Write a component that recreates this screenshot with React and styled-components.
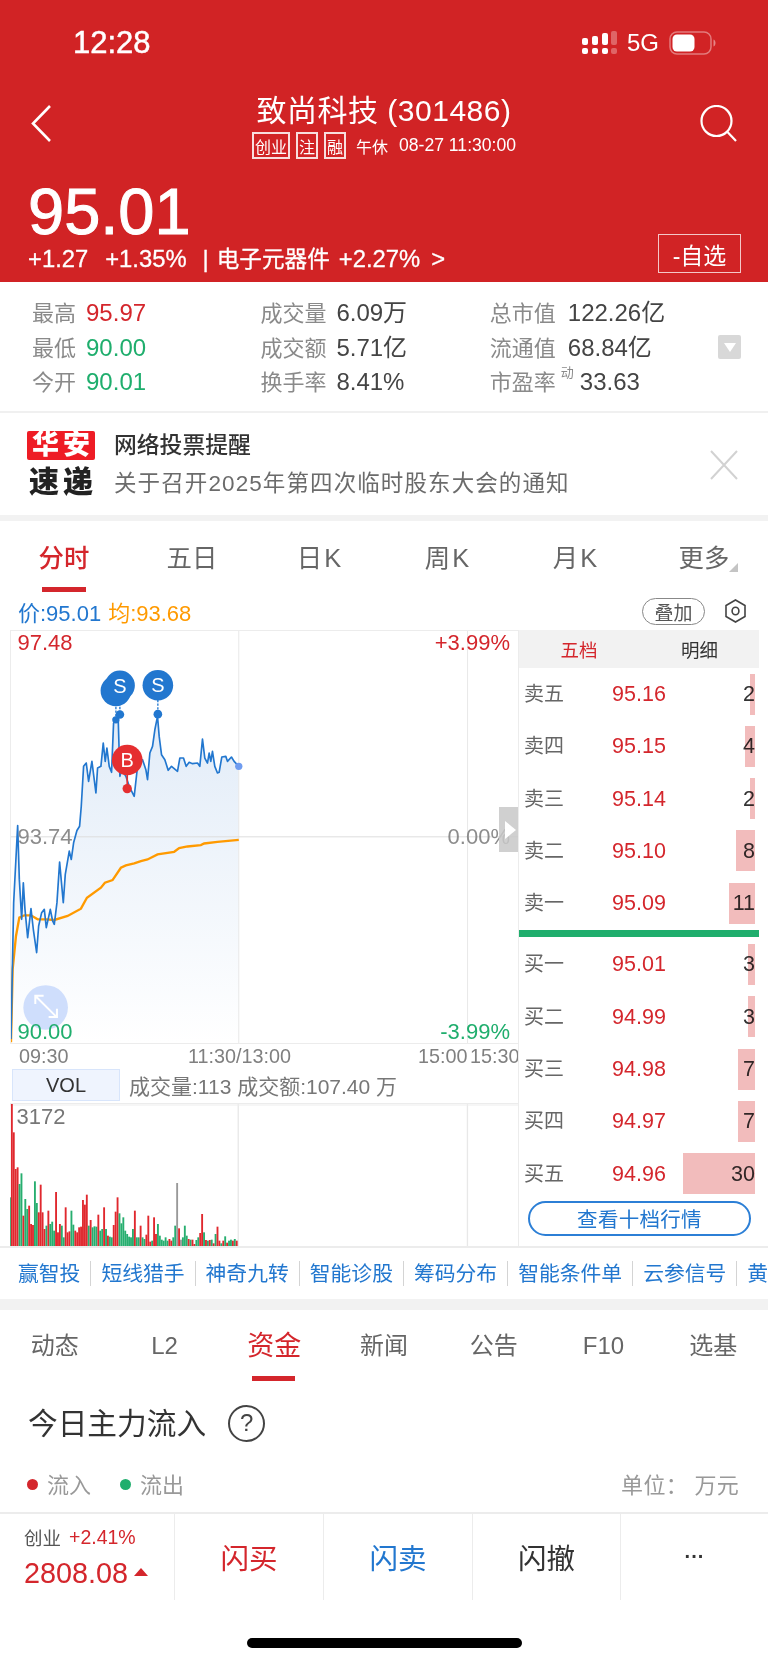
import React from 'react';
import styled, { createGlobalStyle } from 'styled-components';

const RED = '#d4262c';
const GREEN = '#1fae6d';
const BLUE = '#2277cf';
const ORANGE = '#ff9a00';
const LINE = '#ececec';
const FONT = '"Liberation Sans", "Noto Sans CJK SC", sans-serif';

const GlobalStyle = createGlobalStyle`
  html, body {
    margin: 0;
    padding: 0;
    background: #fff;
    font-family: ${FONT};
  }
  * { box-sizing: border-box; }
`;

const Page = styled.div`
  width: 768px;
  height: 1662px;
  overflow: hidden;
  background: #fff;
  color: #333;
`;

// Red header
const Header = styled.header`
  height: 282px;
  background: #d12325;
  color: #fff;
`;

const StatusBar = styled.div`
  height: 86px;
  padding: 0 52px 0 73px;
  display: flex;
  align-items: center;
  justify-content: space-between;
`;

const Clock = styled.span`
  font-size: 31px;
  font-weight: 500;
  -webkit-text-stroke: 0.5px #fff;
`;

const StatusIcons = styled.div`
  display: flex;
  align-items: center;
  gap: 10px;
  font-size: 24px;
`;

const NavRow = styled.div`
  height: 74px;
  padding: 0 31px;
  display: grid;
  grid-template-columns: 1fr auto 1fr;
  align-items: center;
`;

const NavRight = styled.div`
  display: flex;
  justify-content: flex-end;
`;

const TitleBlock = styled.div`
  display: flex;
  flex-direction: column;
  align-items: center;
`;

const StockName = styled.div`
  font-size: 30px;
  line-height: 36px;
  letter-spacing: 0.5px;
  margin-top: 6px;
  white-space: nowrap;
`;

const TagRow = styled.div`
  display: flex;
  align-items: center;
  gap: 6px;
  font-size: 16px;
  white-space: nowrap;
  margin-top: 3px;
`;

const Tag = styled.span`
  height: 27px;
  padding: 0 1px;
  border: 2px solid rgba(255, 255, 255, 0.85);
  display: flex;
  align-items: center;
  font-size: 16px;
`;

const TradeState = styled.span`
  margin-left: 4px;
  margin-right: 5px;
`;

const TradeTime = styled.span`
  font-size: 17.6px;
`;

const PriceRow = styled.div`
  padding: 20px 27px 0 28px;
  display: flex;
  justify-content: space-between;
  align-items: flex-end;
`;

const BigPrice = styled.div`
  font-size: 65px;
  line-height: 64px;
  font-weight: 500;
  -webkit-text-stroke: 1px #fff;
`;

const QuoteLine = styled.div`
  display: flex;
  align-items: baseline;
  font-size: 23.8px;
  line-height: 26px;
  margin-top: 2px;
  white-space: nowrap;
  -webkit-text-stroke: 0.3px #fff;
`;

const QuoteItem = styled.span`
  font-size: ${(p) => (p.$cjk ? '22.6px' : 'inherit')};
  margin-right: ${(p) => p.$gap || 0}px;
`;

const WatchButton = styled.div`
  width: 83px;
  height: 39px;
  border: 1px solid rgba(255, 255, 255, 0.75);
  display: flex;
  align-items: center;
  justify-content: center;
  font-size: 23px;
`;

// Stats
const StatsPanel = styled.section`
  height: 131px;
  padding: 14px 27px 0 32px;
  display: flex;
  border-bottom: 2px solid #f0f0f0;
`;

const StatColumn = styled.div`
  width: ${(p) => p.$w}px;
  display: flex;
  flex-direction: column;
`;

const StatRow = styled.div`
  height: 34.5px;
  line-height: 34.5px;
  display: flex;
  align-items: baseline;
  font-size: 22px;
  white-space: nowrap;
`;

const StatLabel = styled.span`
  color: #8a8a8a;
  margin-right: ${(p) => p.$gap}px;
`;

const StatSup = styled.span`
  align-self: flex-start;
  font-size: 13px;
  line-height: 14px;
  color: #8a8a8a;
  margin-top: 1px;
  margin-left: -7px;
  margin-right: 6px;
`;

const StatValue = styled.span`
  font-size: 24px;
  color: ${(p) => p.$color || '#444'};
`;

const CollapseBox = styled.div`
  width: 23px;
  height: 24px;
  margin-left: auto;
  margin-top: 39px;
  border-radius: 2px;
  background: #d8d8d8;
  display: flex;
  align-items: center;
  justify-content: center;

  &::after {
    content: '';
    border-left: 6px solid transparent;
    border-right: 6px solid transparent;
    border-top: 9px solid #fff;
  }
`;

// Notice
const Notice = styled.section`
  height: 102px;
  padding: 18px 29px 0 27px;
  display: flex;
`;

const NoticeLogo = styled.div`
  width: 68px;
  margin-right: 19px;
  display: flex;
  flex-direction: column;
  align-items: center;
`;

const LogoTop = styled.div`
  width: 68px;
  height: 29px;
  background: #ee1c25;
  border-radius: 2px;
  color: #fff;
  font-size: 27px;
  line-height: 28px;
  font-weight: 900;
  text-align: center;
  letter-spacing: 4px;
  padding-left: 4px;
  white-space: nowrap;
`;

const LogoBottom = styled.div`
  margin-top: 9px;
  color: #222;
  font-size: 30px;
  line-height: 26px;
  font-weight: 900;
  white-space: nowrap;
  letter-spacing: 4px;
  padding-left: 4px;
`;

const NoticeText = styled.div`
  flex: 1;
  display: flex;
  flex-direction: column;
`;

const NoticeTitle = styled.div`
  font-size: 22.8px;
  line-height: 28px;
  color: #333;
  font-weight: 500;
`;

const NoticeBody = styled.div`
  margin-top: 11px;
  font-size: 22.5px;
  line-height: 28px;
  color: #6b6b6b;
  letter-spacing: 1.1px;
  white-space: nowrap;
`;

const CloseIcon = styled.svg`
  width: 30px;
  height: 30px;
  margin-top: 19px;
`;

const Band = styled.div`
  height: ${(p) => p.$h}px;
  background: #f2f2f2;
`;

// Period tabs
const PeriodTabs = styled.nav`
  height: 71px;
  display: grid;
  grid-template-columns: repeat(6, 128px);
`;

const PeriodTab = styled.div`
  position: relative;
  padding-top: 19px;
  line-height: 36px;
  text-align: center;
  font-size: 25.4px;
  letter-spacing: ${(p) => (p.$spaced ? 2 : 0)}px;
  color: ${(p) => (p.$active ? RED : '#666')};
  font-weight: ${(p) => (p.$active ? 500 : 400)};

  &::after {
    content: '';
    display: ${(p) => (p.$active ? 'block' : 'none')};
    position: absolute;
    left: 42px;
    bottom: 0;
    width: 44px;
    height: 5px;
    background: ${RED};
  }
`;

const CornerMark = styled.span`
  position: absolute;
  left: 89px;
  top: 42px;
  width: 9px;
  height: 9px;
  background: #c4c4c4;
  clip-path: polygon(100% 0, 100% 100%, 0 100%);
`;

const PriceLegend = styled.div`
  height: 38px;
  padding: 0 22px 0 18px;
  display: flex;
  align-items: center;
  font-size: 22px;
  white-space: nowrap;
`;

const LegendValue = styled.span`
  color: ${(p) => p.$color};
  margin-right: 7px;
`;

const OverlayButton = styled.div`
  margin-left: auto;
  margin-right: 20px;
  width: 63px;
  height: 27px;
  border: 1px solid #888;
  border-radius: 14px;
  display: flex;
  align-items: center;
  justify-content: center;
  font-size: 19px;
  color: #555;
`;

// Chart + order book
const MarketGrid = styled.section`
  height: 616px;
  display: grid;
  grid-template-columns: 518px 241px;
`;

const ChartColumn = styled.div`
  display: flex;
  flex-direction: column;
`;

const ChartBox = styled.div`
  position: relative;
  width: 508.5px;
  height: 414px;
  margin-left: 9.5px;
  border: 1px solid ${LINE};
  border-right: none;
`;

const ChartSvg = styled.svg`
  display: block;
  width: 100%;
  height: 100%;
`;

const ChartLabel = styled.span`
  position: absolute;
  left: ${(p) => (p.$right ? 'auto' : '7px')};
  right: ${(p) => (p.$right ? '8px' : 'auto')};
  top: ${(p) => p.$top}px;
  font-size: 22px;
  line-height: 26px;
  color: ${(p) => p.$color};
  white-space: nowrap;
`;

const SidePull = styled.div`
  position: absolute;
  right: 0;
  top: 176px;
  width: 19px;
  height: 45px;
  background: rgba(200, 200, 200, 0.85);
  display: flex;
  align-items: center;
  justify-content: center;

  &::after {
    content: '';
    margin-left: 4px;
    border-top: 9px solid transparent;
    border-bottom: 9px solid transparent;
    border-left: 11px solid #fff;
  }
`;

const TimeAxis = styled.div`
  height: 25px;
  padding-left: 19px;
  display: grid;
  grid-template-columns: 169px 230px 52px 48px;
  align-items: center;
  font-size: 19.8px;
  color: #808080;
  white-space: nowrap;
`;

const VolHeader = styled.div`
  height: 34px;
  padding: 0 0 2px 12px;
  display: flex;
  align-items: center;
  gap: 9px;
  font-size: 21px;
  color: #777;
  white-space: nowrap;
`;

const VolTag = styled.div`
  width: 108px;
  height: 32px;
  background: #eff4fe;
  border: 1px solid #d8e5fb;
  color: #333;
  font-size: 20px;
  display: flex;
  align-items: center;
  justify-content: center;
`;

const VolBox = styled.div`
  position: relative;
  width: 508.5px;
  height: 143px;
  margin-left: 9.5px;
  border-top: 1px solid ${LINE};
`;

const OrderBook = styled.div`
  display: flex;
  flex-direction: column;
  border-left: 1px solid ${LINE};
`;

const BookTabs = styled.div`
  height: 38px;
  background: #f2f2f2;
  display: grid;
  grid-template-columns: 120px 121px;
  align-items: center;
  font-size: 18.5px;
  text-align: center;
`;

const BookTab = styled.span`
  color: ${(p) => (p.$active ? RED : '#333')};
`;

const BookRow = styled.div`
  position: relative;
  height: 52.3px;
  line-height: 52.3px;
  padding-left: 5px;
  display: grid;
  grid-template-columns: 45px 140px 46px;
  align-items: baseline;
  font-size: 21.5px;
`;

const BookLabel = styled.span`
  font-size: 20px;
  color: #666;
`;

const BookPrice = styled.span`
  color: ${RED};
  text-align: center;
`;

const BookQty = styled.span`
  text-align: right;
  color: #333;
`;

const QtyBar = styled.span`
  position: absolute;
  right: 4px;
  top: 5.5px;
  height: 41px;
  background: #f2bcbc;
  mix-blend-mode: multiply;
`;

const BookDivider = styled.div`
  height: 7px;
  margin: 1px 0;
  background: ${GREEN};
`;

const BookButton = styled.div`
  height: 35px;
  margin: 1px 8px 0 9px;
  border: 2px solid #2c7fd6;
  border-radius: 18px;
  color: ${BLUE};
  font-size: 20.5px;
  display: flex;
  align-items: center;
  justify-content: center;
  letter-spacing: 0.3px;
`;

// Quick links
const LinkBar = styled.nav`
  height: 53px;
  padding-left: 8px;
  border-top: 2px solid ${LINE};
  display: flex;
  align-items: center;
  overflow: hidden;
  white-space: nowrap;
  font-size: 20.8px;
  color: ${BLUE};
`;

const QuickLink = styled.span`
  flex: none;
  height: 25px;
  line-height: 25px;
  padding: 0 10px;
  border-right: ${(p) => (p.$last ? 'none' : '1px solid #d4d4d4')};
`;

// Section tabs
const SectionTabs = styled.nav`
  height: 71px;
  display: grid;
  grid-template-columns: repeat(7, 1fr);
`;

const SectionTab = styled.div`
  position: relative;
  padding-top: 18px;
  line-height: 36px;
  text-align: center;
  font-size: ${(p) => (p.$active ? 27 : 24)}px;
  color: ${(p) => (p.$active ? RED : '#666')};

  &::after {
    content: '';
    display: ${(p) => (p.$active ? 'block' : 'none')};
    position: absolute;
    left: 33px;
    bottom: 0;
    width: 43px;
    height: 5px;
    background: ${RED};
  }
`;

const FlowTitle = styled.div`
  height: 80px;
  padding-left: 28px;
  display: flex;
  align-items: center;
  gap: 22px;
  font-size: 29.7px;
  color: #333;
`;

const HelpBadge = styled.span`
  width: 37px;
  height: 37px;
  margin-top: 4px;
  border: 2px solid #444;
  border-radius: 50%;
  display: flex;
  align-items: center;
  justify-content: center;
  font-size: 24px;
  color: #444;
`;

const FlowLegend = styled.div`
  height: 44px;
  padding: 0 29px 0 27px;
  display: flex;
  align-items: center;
  font-size: 22px;
  color: #999;
`;

const Dot = styled.i`
  width: 11px;
  height: 11px;
  margin-top: 2px;
  border-radius: 50%;
  background: ${(p) => p.$color};
  margin-right: 9px;
`;

const LegendText = styled.span`
  margin-right: 29px;
`;

const Unit = styled.span`
  margin-left: auto;
  letter-spacing: 0.3px;
`;

// Bottom action bar
const ActionBar = styled.footer`
  height: 88px;
  margin-top: 7px;
  border-top: 2px solid ${LINE};
  display: grid;
  grid-template-columns: 175px 149px 149px 148px 1fr;
`;

const IndexCell = styled.div`
  padding: 8px 0 0 24px;
  border-right: 1px solid ${LINE};
  white-space: nowrap;
`;

const IndexTop = styled.div`
  display: flex;
  align-items: center;
  gap: 8px;
  height: 30px;
  font-size: 18.5px;
  color: #555;
`;

const IndexChange = styled.span`
  color: ${RED};
  font-size: 19.5px;
`;

const IndexPrice = styled.div`
  display: flex;
  align-items: center;
  gap: 6px;
  margin-top: 3px;
  font-size: 28.8px;
  line-height: 36px;
  color: ${RED};

  &::after {
    content: '';
    border-left: 7px solid transparent;
    border-right: 7px solid transparent;
    border-bottom: 8px solid ${RED};
    margin-bottom: 2px;
  }
`;

const ActionCell = styled.div`
  display: flex;
  align-items: center;
  justify-content: center;
  padding-bottom: 1px;
  font-size: ${(p) => (p.$small ? 20 : 28.5)}px;
  font-weight: ${(p) => (p.$small ? 700 : 400)};
  color: ${(p) => p.$color || '#333'};
  border-right: ${(p) => (p.$last ? 'none' : `1px solid ${LINE}`)};
`;

const HomeZone = styled.div`
  height: 62px;
  padding-top: 38px;
  display: flex;
  justify-content: center;
`;

const HomeBar = styled.div`
  width: 275px;
  height: 10px;
  border-radius: 5px;
  background: #000;
`;

// Data read off the picture, in 3x chart units
const pricePoints = '30,1260 38,850 50,618 55,780 62,900 67,790 72,870 80,955 90,868 97,930 107,1000 113,920 122,880 130,870 136,925 148,870 155,905 160,915 168,850 176,728 187,850 193,765 205,695 211,720 218,670 228,633 236,620 241,560 248,440 256,430 263,485 273,425 285,520 290,445 300,440 307,370 313,425 318,385 325,440 332,458 338,310 345,300 352,300 357,470 362,450 375,470 385,500 400,530 410,440 425,420 435,450 440,480 447,400 455,380 462,330 470,290 475,350 482,405 492,420 502,452 512,440 530,455 537,415 548,415 556,440 565,428 575,432 590,430 597,440 605,358 612,415 620,430 625,400 630,425 635,395 642,440 650,460 655,458 663,412 675,410 680,425 692,412 700,425 714,440';
const avgPoints = '30,1270 35,1050 45,950 55,895 70,888 90,888 110,900 135,900 160,902 200,890 240,868 258,835 300,805 312,790 335,782 360,745 375,738 400,732 420,725 440,720 470,705 520,697 535,686 560,681 600,677 610,672 650,667 714,661';

const volBars = [
  ['g', 470], ['r', 190], ['r', 275], ['r', 385], ['r', 380], ['g', 430], ['g', 398], ['r', 525], ['g', 475], ['g', 505],
  ['r', 495], ['r', 550], ['r', 553], ['g', 422], ['g', 487], ['r', 515], ['r', 432], ['r', 515], ['r', 565], ['g', 555],
  ['r', 510], ['g', 550], ['g', 543], ['g', 570], ['r', 454], ['r', 575], ['r', 550], ['g', 555], ['g', 590], ['r', 500],
  ['r', 575], ['r', 572], ['g', 510], ['g', 552], ['r', 570], ['r', 575], ['r', 560], ['r', 558], ['r', 478], ['r', 492],
  ['r', 462], ['g', 555], ['r', 538], ['g', 560], ['g', 557], ['g', 558], ['r', 522], ['g', 570], ['g', 565], ['r', 500],
  ['g', 565], ['r', 585], ['g', 588], ['g', 590], ['r', 553], ['r', 513], ['r', 470], ['g', 518], ['g', 548], ['g', 530],
  ['g', 570], ['g', 580], ['g', 588], ['g', 590], ['g', 565], ['r', 510], ['g', 590], ['g', 590], ['r', 555], ['g', 590],
  ['g', 595], ['r', 582], ['r', 525], ['r', 603], ['g', 600], ['r', 530], ['r', 580], ['g', 550], ['g', 585], ['g', 597],
  ['g', 600], ['g', 590], ['g', 600], ['r', 595], ['r', 600], ['g', 590], ['g', 555], ['n', 427], ['r', 563], ['n', 597],
  ['g', 590], ['g', 555], ['g', 585], ['r', 595], ['g', 597], ['r', 597], ['r', 610], ['g', 598], ['g', 590], ['r', 577],
  ['r', 520], ['g', 575], ['r', 598], ['g', 600], ['r', 598], ['g', 597], ['r', 608], ['g', 580], ['r', 558], ['r', 600],
  ['g', 608], ['r', 600], ['g', 587], ['r', 606], ['g', 600], ['g', 597], ['r', 600], ['g', 595], ['r', 600],
];
const volColors = { r: '#e0282e', g: '#27ae6f', n: '#999' };

const stats = [
  {
    width: 230,
    gap: 10,
    items: [
      { label: '最高', value: '95.97', color: RED },
      { label: '最低', value: '90.00', color: GREEN },
      { label: '今开', value: '90.01', color: GREEN },
    ],
  },
  {
    width: 231,
    gap: 10,
    items: [
      { label: '成交量', value: '6.09万' },
      { label: '成交额', value: '5.71亿' },
      { label: '换手率', value: '8.41%' },
    ],
  },
  {
    width: 230,
    gap: 12,
    items: [
      { label: '总市值', value: '122.26亿' },
      { label: '流通值', value: '68.84亿' },
      { label: '市盈率', sup: '动', value: '33.63' },
    ],
  },
];

const asks = [
  ['卖五', '95.16', 2], ['卖四', '95.15', 4], ['卖三', '95.14', 2], ['卖二', '95.10', 8], ['卖一', '95.09', 11],
];
const bids = [
  ['买一', '95.01', 3], ['买二', '94.99', 3], ['买三', '94.98', 7], ['买四', '94.97', 7], ['买五', '94.96', 30],
];

const links = ['赢智投', '短线猎手', '神奇九转', '智能诊股', '筹码分布', '智能条件单', '云参信号', '黄金分割'];
const sectionTabs = ['动态', 'L2', '资金', '新闻', '公告', 'F10', '选基'];

const SignalIcon = () => (
  <svg width="35" height="24" viewBox="0 0 35 24" fill="#fff">
    <rect x="0" y="7" width="6" height="7" rx="2" />
    <rect x="10" y="5" width="6" height="9" rx="2" />
    <rect x="20" y="2" width="6" height="12" rx="2" />
    <rect x="29" y="0" width="6" height="14" rx="2" opacity="0.3" />
    <rect x="0" y="17" width="6" height="6" rx="2" />
    <rect x="10" y="17" width="6" height="6" rx="2" />
    <rect x="20" y="17" width="6" height="6" rx="2" />
    <rect x="29" y="17" width="6" height="6" rx="2" opacity="0.3" />
  </svg>
);

const BatteryIcon = () => (
  <svg width="47" height="24" viewBox="0 0 47 24" fill="none">
    <rect x="1" y="1" width="41" height="22" rx="7" stroke="#fff" strokeOpacity="0.4" strokeWidth="1.5" />
    <rect x="3.5" y="3.5" width="22" height="17" rx="4.5" fill="#fff" />
    <path d="M44.5 8.5c1.5.6 2 2 2 3.5s-.5 2.9-2 3.5z" fill="#fff" fillOpacity="0.45" />
  </svg>
);

const BackIcon = () => (
  <svg width="20" height="37" viewBox="0 0 20 37" fill="none">
    <path d="M19 1 2 18.5 19 36" stroke="#fff" strokeWidth="2.6" />
  </svg>
);

const SearchIcon = () => (
  <svg width="37" height="37" viewBox="0 0 37 37" fill="none">
    <circle cx="16.5" cy="16" r="15" stroke="#fff" strokeWidth="2.2" />
    <path d="M27.5 27 36 36" stroke="#fff" strokeWidth="2.2" />
  </svg>
);

const HexIcon = () => (
  <svg width="21" height="24" viewBox="0 0 21 24" fill="none" stroke="#444" strokeWidth="1.6">
    <path d="M10.5 1 20 6.5v11L10.5 23 1 17.5v-11z" />
    <ellipse cx="10.5" cy="12" rx="3.4" ry="3.8" />
  </svg>
);

const PriceChart = () => (
  <ChartSvg viewBox="30 33 1524 1239" preserveAspectRatio="none">
    <defs>
      <linearGradient id="areaFill" x1="0" y1="0" x2="0" y2="1">
        <stop offset="0" stopColor="#e2ecf8" />
        <stop offset="1" stopColor="#ffffff" />
      </linearGradient>
    </defs>
    <polygon points={`${pricePoints} 714,1272 30,1272`} fill="url(#areaFill)" />
    <path d="M714 33V1272M1401 33V1272" stroke="#e8e8e8" strokeWidth="3" />
    <path d="M30 652H1554" stroke="#ddd" strokeWidth="3" />
    <polyline points={avgPoints} fill="none" stroke={ORANGE} strokeWidth="7" />
    <polyline points={pricePoints} fill="none" stroke={BLUE} strokeWidth="5" strokeLinejoin="round" />
    <circle cx="714" cy="440" r="11" fill="#6f9cf0" />

    <path d="M345 250V300M357 250V284M471 240V283" stroke={BLUE} strokeWidth="4" strokeDasharray="7 4" />
    <circle cx="345" cy="300" r="11" fill={BLUE} />
    <circle cx="357" cy="284" r="13" fill={BLUE} />
    <circle cx="471" cy="283" r="13" fill={BLUE} />
    <circle cx="345" cy="213" r="46" fill={BLUE} />
    <circle cx="357" cy="197" r="45" fill={BLUE} />
    <circle cx="471" cy="196" r="46" fill={BLUE} />
    <text x="357" y="219" textAnchor="middle" fontFamily={FONT} fontSize="60" fill="#fff">S</text>
    <text x="471" y="217" textAnchor="middle" fontFamily={FONT} fontSize="60" fill="#fff">S</text>

    <path d="M379 460V507" stroke="#e52e30" strokeWidth="5" />
    <circle cx="379" cy="507" r="14" fill="#e52e30" />
    <circle cx="379" cy="421" r="46" fill="#e52e30" />
    <text x="379" y="442" textAnchor="middle" fontFamily={FONT} fontSize="60" fill="#fff">B</text>

    <circle cx="134" cy="1165" r="67" fill="#cfdefc" />
    <path d="M105 1132 165 1192M103 1155V1130H128M168 1169V1194H143" fill="none" stroke="#fff" strokeWidth="6" />
  </ChartSvg>
);

const VolumeChart = () => (
  <ChartSvg viewBox="30 190 1524 426" preserveAspectRatio="none">
    <path d="M714 190V616M1401 190V616" stroke="#e8e8e8" strokeWidth="4" />
    <path d="M30 193H1554" stroke="#eee" strokeWidth="3" />
    {volBars.map(([kind, top], i) => (
      <rect key={i} x={27 + i * 5.76} y={top} width="5.6" height={616 - top} fill={volColors[kind]} />
    ))}
  </ChartSvg>
);

const BookLine = ({ row }) => (
  <BookRow>
    <BookLabel>{row[0]}</BookLabel>
    <BookPrice>{row[1]}</BookPrice>
    <BookQty>{row[2]}</BookQty>
    <QtyBar style={{ width: `${row[2] * 2.4}px` }} />
  </BookRow>
);

const App = () => {
  return (
    <Page>
      <GlobalStyle />
      <Header>
        <StatusBar>
          <Clock>12:28</Clock>
          <StatusIcons>
            <SignalIcon />
            <span>5G</span>
            <BatteryIcon />
          </StatusIcons>
        </StatusBar>
        <NavRow>
          <BackIcon />
          <TitleBlock>
            <StockName>致尚科技 (301486)</StockName>
            <TagRow>
              <Tag>创业</Tag>
              <Tag>注</Tag>
              <Tag>融</Tag>
              <TradeState>午休</TradeState>
              <TradeTime>08-27 11:30:00</TradeTime>
            </TagRow>
          </TitleBlock>
          <NavRight>
            <SearchIcon />
          </NavRight>
        </NavRow>
        <PriceRow>
          <div>
            <BigPrice>95.01</BigPrice>
            <QuoteLine>
              <QuoteItem $gap={17}>+1.27</QuoteItem>
              <QuoteItem $gap={16}>+1.35%</QuoteItem>
              <QuoteItem $gap={8}>|</QuoteItem>
              <QuoteItem $gap={9} $cjk>电子元器件</QuoteItem>
              <QuoteItem $gap={11}>+2.27%</QuoteItem>
              <QuoteItem>&gt;</QuoteItem>
            </QuoteLine>
          </div>
          <WatchButton>-自选</WatchButton>
        </PriceRow>
      </Header>

      <StatsPanel>
        {stats.map((col) => (
          <StatColumn key={col.items[0].label} $w={col.width}>
            {col.items.map((item) => (
              <StatRow key={item.label}>
                <StatLabel $gap={col.gap}>{item.label}</StatLabel>
                {item.sup && <StatSup>{item.sup}</StatSup>}
                <StatValue $color={item.color}>{item.value}</StatValue>
              </StatRow>
            ))}
          </StatColumn>
        ))}
        <CollapseBox />
      </StatsPanel>

      <Notice>
        <NoticeLogo>
          <LogoTop>华安</LogoTop>
          <LogoBottom>速递</LogoBottom>
        </NoticeLogo>
        <NoticeText>
          <NoticeTitle>网络投票提醒</NoticeTitle>
          <NoticeBody>关于召开2025年第四次临时股东大会的通知</NoticeBody>
        </NoticeText>
        <CloseIcon viewBox="0 0 30 30" fill="none">
          <path d="M2 1 28 29M28 1 2 29" stroke="#d2d2d2" strokeWidth="2" />
        </CloseIcon>
      </Notice>
      <Band $h={6} />

      <PeriodTabs>
        <PeriodTab $active>分时</PeriodTab>
        <PeriodTab>五日</PeriodTab>
        <PeriodTab $spaced>日K</PeriodTab>
        <PeriodTab $spaced>周K</PeriodTab>
        <PeriodTab $spaced>月K</PeriodTab>
        <PeriodTab>
          更多
          <CornerMark />
        </PeriodTab>
      </PeriodTabs>

      <PriceLegend>
        <LegendValue $color={BLUE}>价:95.01</LegendValue>
        <LegendValue $color={ORANGE}>均:93.68</LegendValue>
        <OverlayButton>叠加</OverlayButton>
        <HexIcon />
      </PriceLegend>

      <MarketGrid>
        <ChartColumn>
          <ChartBox>
            <PriceChart />
            <ChartLabel $top={-1} $color={RED}>97.48</ChartLabel>
            <ChartLabel $top={-1} $right $color={RED}>+3.99%</ChartLabel>
            <ChartLabel $top={193} $color="#8c8c8c">93.74</ChartLabel>
            <ChartLabel $top={193} $right $color="#8c8c8c">0.00%</ChartLabel>
            <ChartLabel $top={388} $color={GREEN}>90.00</ChartLabel>
            <ChartLabel $top={388} $right $color={GREEN}>-3.99%</ChartLabel>
            <SidePull />
          </ChartBox>
          <TimeAxis>
            <span>09:30</span>
            <span>11:30/13:00</span>
            <span>15:00</span>
            <span>15:30</span>
          </TimeAxis>
          <VolHeader>
            <VolTag>VOL</VolTag>
            <span>成交量:113 成交额:107.40 万</span>
          </VolHeader>
          <VolBox>
            <VolumeChart />
            <ChartLabel $top={0} $color="#777">3172</ChartLabel>
          </VolBox>
        </ChartColumn>

        <OrderBook>
          <BookTabs>
            <BookTab $active>五档</BookTab>
            <BookTab>明细</BookTab>
          </BookTabs>
          {asks.map((row) => (
            <BookLine key={row[0]} row={row} />
          ))}
          <BookDivider />
          {bids.map((row) => (
            <BookLine key={row[0]} row={row} />
          ))}
          <BookButton>查看十档行情</BookButton>
        </OrderBook>
      </MarketGrid>

      <LinkBar>
        {links.map((name, i) => (
          <QuickLink key={name} $last={i === links.length - 1}>{name}</QuickLink>
        ))}
      </LinkBar>
      <Band $h={11} />

      <SectionTabs>
        {sectionTabs.map((name) => (
          <SectionTab key={name} $active={name === '资金'}>{name}</SectionTab>
        ))}
      </SectionTabs>

      <FlowTitle>
        今日主力流入
        <HelpBadge>?</HelpBadge>
      </FlowTitle>
      <FlowLegend>
        <Dot $color={RED} />
        <LegendText>流入</LegendText>
        <Dot $color={GREEN} />
        <LegendText>流出</LegendText>
        <Unit>单位： 万元</Unit>
      </FlowLegend>

      <ActionBar>
        <IndexCell>
          <IndexTop>
            创业
            <IndexChange>+2.41%</IndexChange>
          </IndexTop>
          <IndexPrice>2808.08</IndexPrice>
        </IndexCell>
        <ActionCell $color={RED}>闪买</ActionCell>
        <ActionCell $color={BLUE}>闪卖</ActionCell>
        <ActionCell>闪撤</ActionCell>
        <ActionCell $last $small>···</ActionCell>
      </ActionBar>
      <HomeZone>
        <HomeBar />
      </HomeZone>
    </Page>
  );
};

export default App;
